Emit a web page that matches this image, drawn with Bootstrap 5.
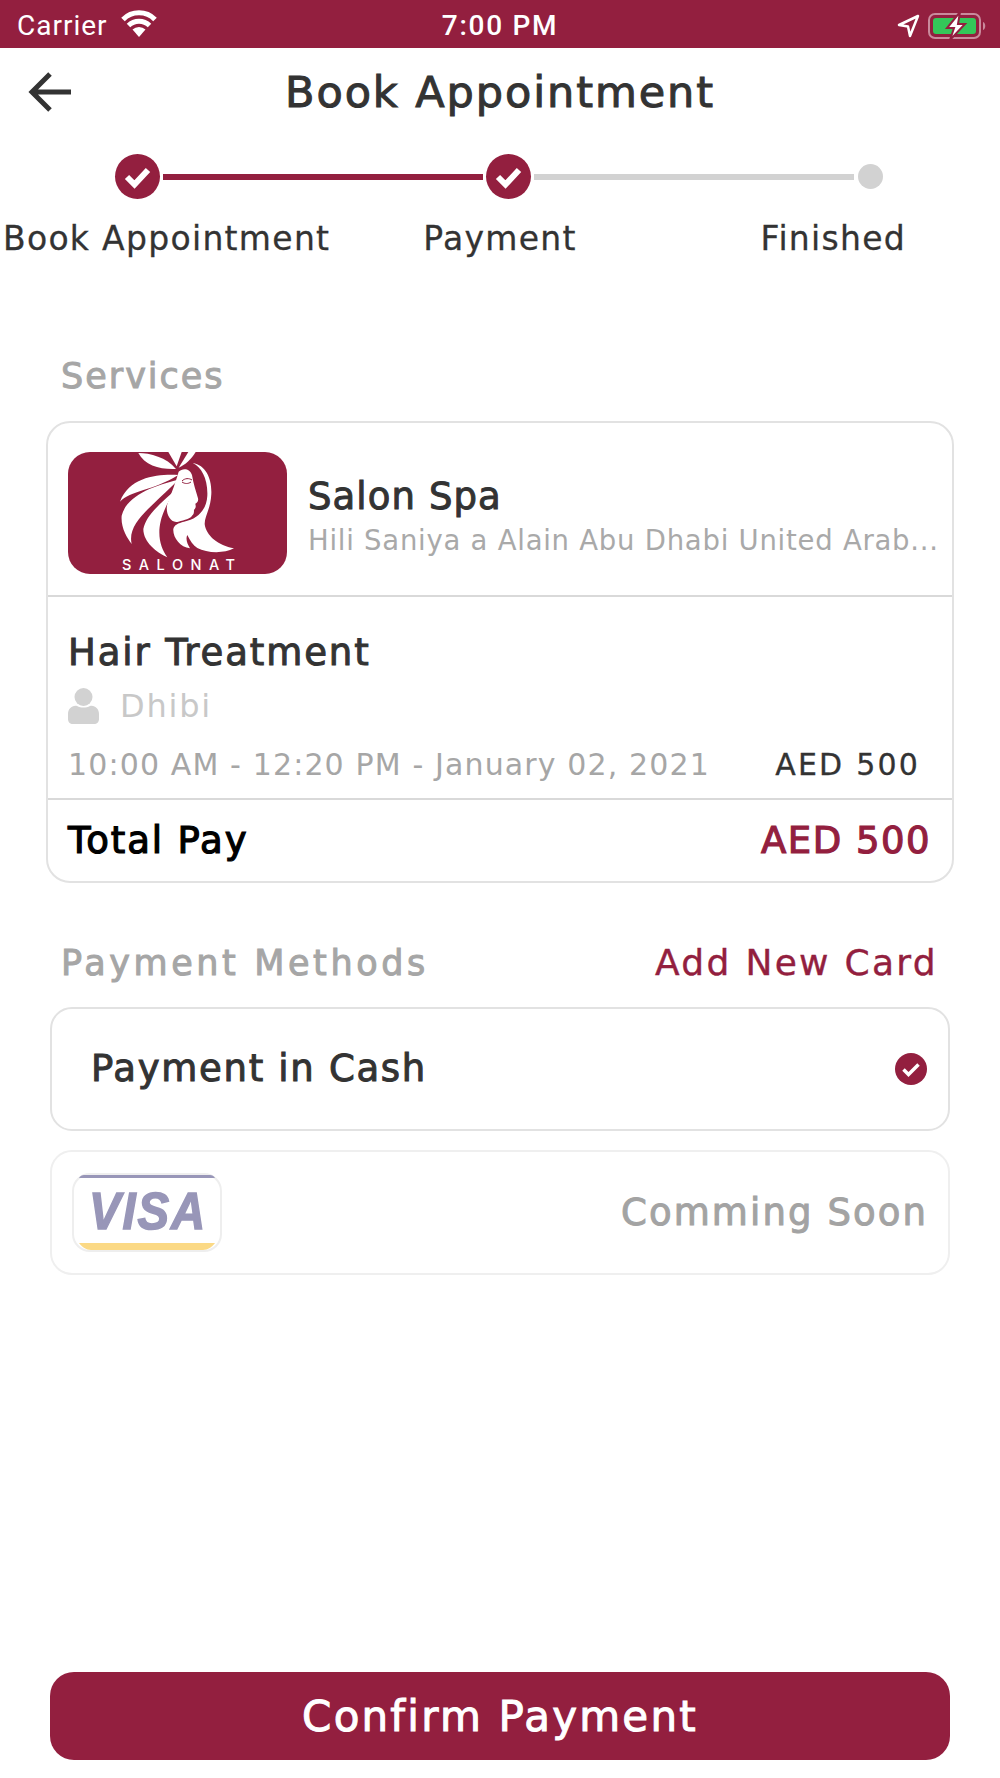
<!DOCTYPE html>
<html lang="en">
<head>
    <meta charset="UTF-8">
    <title>Book Appointment</title>
    <link rel="stylesheet" href="https://cdn.jsdelivr.net/npm/bootstrap@5.3.0/dist/css/bootstrap.min.css">
    <style>
        body { font-family: "DejaVu Sans", sans-serif; color: #333; background: #fff; width: 1000px; height: 1778px; overflow: hidden; display: flex; flex-direction: column; }
        .semi { -webkit-text-stroke: 1px currentColor; }
        .status-bar { background: #931f3f; height: 48px; color: #fff; padding: 3px 12px 0 17px; font-family: Roboto, sans-serif; font-size: 28px; position: relative; flex: none; letter-spacing: 1px; }
        .status-time { position: absolute; left: 0; right: 0; text-align: center; font-weight: 500; letter-spacing: 1.7px; }
        .wifi-icon { margin-left: 12px; margin-bottom: 4px; }
        .top-title { height: 88px; flex: none; padding-left: 28px; position: relative; }
        .top-title h1 { position: absolute; left: 0; right: 0; top: 19px; text-align: center; font-size: 43px; font-weight: 400; margin: 0; letter-spacing: 1.9px; }
        .step-track { padding: 18px 0 0 115px; gap: 3px; flex: none; }
        .step-done { width: 45px; height: 45px; border-radius: 50%; background: #931f3f; flex: none; }
        .step-line { width: 320px; height: 6px; background: #d2d2d2; flex: none; }
        .step-line.on { background: #931f3f; }
        .step-dot { width: 25px; height: 25px; border-radius: 50%; background: #d2d2d2; flex: none; margin-left: 1px; }
        .step-labels { font-size: 33px; margin-top: 20px; line-height: 40px; flex: none; letter-spacing: 1.300px; white-space: nowrap; -webkit-text-stroke: .3px currentColor; }
        .sec-title { font-size: 35px; color: #a6a6a6; line-height: 40px; letter-spacing: 2px; }
        .sec-title.wide { letter-spacing: 3.600px; }
        .services-wrap { padding: 0 46px; margin-top: 97px; flex: none; }
        .services-wrap .sec-title { padding-left: 15px; margin-bottom: 25px; }
        .svc-card { border: 2px solid #e2e2e2; border-radius: 24px; height: 462px; }
        .shop-row { height: 174px; border-bottom: 2px solid #d9d9d9; padding: 29px 12px 0 20px; gap: 21px; }
        .shop-logo { width: 219px; height: 122px; border-radius: 22px; background: #931f3f; flex: none; display: block; }
        .shop-name { font-size: 37px; line-height: 44px; margin-top: 23px; letter-spacing: 1.100px; }
        .shop-addr { font-size: 27.500px; color: #a9a9a9; line-height: 34px; margin-top: 4px; white-space: nowrap; overflow: hidden; letter-spacing: .75px; }
        .treat-row { height: 203px; border-bottom: 2px solid #d9d9d9; padding: 34px 32px 0 20px; }
        .treat-name { font-size: 37px; line-height: 44px; letter-spacing: 1.900px; }
        .staff-row { font-size: 32px; color: #c8c8c8; line-height: 40px; margin-top: 11px; gap: 21px; letter-spacing: 1.800px; }
        .time-row { font-size: 30px; line-height: 40px; margin-top: 19px; color: #a6a6a6; white-space: nowrap; letter-spacing: 1.130px; }
        .time-row b { font-weight: 400; color: #333; letter-spacing: 2.200px; -webkit-text-stroke: .3px currentColor; }
        .total-row { padding: 0 21px 0 20px; height: 81px; font-size: 37px; color: #000; letter-spacing: 1.900px; -webkit-text-stroke: 1.200px currentColor; }
        .total-row b { font-weight: 400; color: #931f3f; letter-spacing: 1.500px; }
        .pay-wrap { padding: 0 50px; margin-top: 60px; flex: none; }
        .pay-head { padding: 0 12px 0 11px; margin-bottom: 24px; }
        .add-card { font-size: 36px; color: #931f3f; line-height: 40px; letter-spacing: 2.300px; -webkit-text-stroke: .4px currentColor; }
        .pay-box { height: 124px; border: 2px solid #e2e2e2; border-radius: 22px; padding: 0 21px 0 39px; font-size: 37px; letter-spacing: 1.700px; }
        .pay-box.off { height: 125px; border-color: #efefef; margin-top: 19px; padding: 0 20px; color: #a3a3a3; letter-spacing: 2.100px; }
        .visa-card { width: 150px; height: 79px; display: block; }
        .visa-word { font-family: "Liberation Sans", sans-serif; font-weight: 700; font-style: italic; font-size: 52px; fill: #9896b8; stroke: #9896b8; stroke-width: 1.500px; }
        .logo-word { font-family: Inter, sans-serif; font-size: 14.500px; font-weight: 500; fill: #fff; }
        .confirm-btn { margin: auto 50px 18px; height: 88px; background: #931f3f; border: 0; border-radius: 24px; color: #fff; font-size: 42px; letter-spacing: 2.200px; flex: none; }
        .confirm-btn:hover { background: #931f3f; color: #fff; }
    </style>
</head>
<body>
    <div class="status-bar d-flex align-items-center">
        <span class="status-time">7:00 PM</span>
        <span>Carrier</span>
        <svg class="wifi-icon" width="38" height="28" viewBox="0 0 38 28"><path d="M19 27 12.500 19.500a9.500 9.500 0 0 1 13 0z" fill="#fff"/><path d="M8.500 15.500a15 15 0 0 1 21 0M3 9.500a22.500 22.500 0 0 1 32 0" fill="none" stroke="#fff" stroke-width="5"/></svg>
        <div class="ms-auto d-flex align-items-center gap-2">
            <svg width="24" height="24" viewBox="0 0 24 24"><path d="M22 2 3 11l9 1.500L14 22z" fill="none" stroke="#fff" stroke-width="2.500" stroke-linejoin="round"/></svg>
            <svg width="60" height="28" viewBox="0 0 60 28">
                <rect x="1" y="2" width="51" height="24" rx="6" fill="none" stroke="#c98a9c" stroke-width="2"/>
                <rect x="5" y="6" width="43" height="16" rx="3" fill="#34c759"/>
                <path d="M55 10c3 1 3 7 0 8z" fill="#c98a9c"/>
                <path d="M32 0 19 16h7l-4 12 15-16h-7z" fill="#fff" stroke="#931f3f" stroke-width="2"/>
            </svg>
        </div>
    </div>

    <div class="top-title d-flex align-items-center">
        <h1 class="semi">Book Appointment</h1>
        <svg width="44" height="44" viewBox="0 0 44 44"><path d="M43 22H5M22 4 4 22l18 18" fill="none" stroke="#333" stroke-width="5"/></svg>
    </div>

    <div class="step-track d-flex align-items-center">
        <div class="step-done"><svg width="45" height="45" viewBox="0 0 45 45"><path d="m12 23 7.500 7.500L33 16" fill="none" stroke="#fff" stroke-width="6"/></svg></div>
        <div class="step-line on"></div>
        <div class="step-done"><svg width="45" height="45" viewBox="0 0 45 45"><path d="m12 23 7.500 7.500L33 16" fill="none" stroke="#fff" stroke-width="6"/></svg></div>
        <div class="step-line"></div>
        <div class="step-dot"></div>
    </div>
    <div class="row g-0 step-labels text-center">
        <div class="col-4">Book Appointment</div>
        <div class="col-4">Payment</div>
        <div class="col-4">Finished</div>
    </div>

    <div class="services-wrap">
        <div class="sec-title semi">Services</div>
        <div class="svc-card">
            <div class="shop-row d-flex">
                <svg class="shop-logo" viewBox="0 0 219 122">
                    <g transform="translate(42 -3) scale(.3333)" fill="#fff">
                        <path d="M85 12C120 12 170 25 198 60 150 62 105 50 85 12z"/>
                        <path d="M175 9h40L200 52z"/>
                        <path d="M206 56 235 9h22C245 30 225 48 206 56z"/>
                        <path d="M205 78C150 75 60 80 30 158 60 125 130 125 205 78z"/>
                        <path d="M205 92C130 110 50 140 35 200 32 235 50 265 65 285 50 220 130 170 205 92z"/>
                        <path d="M207 112C170 150 110 190 100 240 100 280 140 310 172 325 140 280 130 210 207 112z"/>
                        <path d="M206 68C218 56 240 58 246 78 250 105 258 125 264 148 266 156 262 160 256 164 258 172 258 178 252 182 252 190 252 196 246 200 240 210 225 212 205 218 180 225 165 190 172 165 186 130 198 95 206 68z"/>
                        <path d="M248 42C288 48 306 90 304 135 302 180 284 200 284 225 288 260 325 290 372 298 340 315 290 312 262 297 250 290 240 275 232 258 226 270 232 285 240 298 210 295 188 265 190 240 192 228 205 222 222 218 265 210 290 180 292 140 294 90 275 55 248 42z"/>
                    </g>
                    <path d="M114 30c3 2 6 2 9 0M114 29c3-3 7-3 10-1" fill="none" stroke="#931f3f" stroke-width="1"/>
                    <text class="logo-word" x="54" y="118" textLength="113">SALONAT</text>
                </svg>
                <div class="flex-grow-1 overflow-hidden">
                    <div class="shop-name semi">Salon Spa</div>
                    <div class="shop-addr">Hili Saniya a Alain Abu Dhabi United Arab...</div>
                </div>
            </div>
            <div class="treat-row">
                <div class="treat-name semi">Hair Treatment</div>
                <div class="staff-row d-flex align-items-center">
                    <svg width="31" height="38" viewBox="0 0 31 38"><circle cx="15.500" cy="10" r="9" fill="#d2d2d2"/><path d="M0 27c0-5 4-9 9-8 4 2 9 2 13 0 5-1 9 3 9 8v5c0 3-2 5-5 5H5c-3 0-5-2-5-5z" fill="#d2d2d2"/></svg>
                    <span>Dhibi</span>
                </div>
                <div class="time-row d-flex justify-content-between">
                    <span>10:00 AM - 12:20 PM - January 02, 2021</span>
                    <b>AED 500</b>
                </div>
            </div>
            <div class="total-row d-flex justify-content-between align-items-center">
                <span>Total Pay</span>
                <b>AED 500</b>
            </div>
        </div>
    </div>

    <div class="pay-wrap">
        <div class="pay-head d-flex justify-content-between">
            <div class="sec-title wide semi">Payment Methods</div>
            <div class="add-card">Add New Card</div>
        </div>
        <div class="pay-box d-flex align-items-center justify-content-between">
            <span class="semi">Payment in Cash</span>
            <svg width="32" height="32" viewBox="0 0 32 32"><circle cx="16" cy="16" r="16" fill="#931f3f"/><path d="m8.500 16.500 5 5 10-10" fill="none" stroke="#fff" stroke-width="3.500"/></svg>
        </div>
        <div class="pay-box off d-flex align-items-center justify-content-between">
            <svg class="visa-card" viewBox="0 0 150 79">
                <rect x="1" y="1" width="148" height="77" rx="17" fill="#fff" stroke="#eee" stroke-width="2"/>
                <path d="M12 2h126c2 0 4 1 5 3H7c1-2 3-3 5-3z" fill="#9896b8"/>
                <path d="M7 70h136c-3 4-7 7-12 7H19c-5 0-9-3-12-7z" fill="#fbd985"/>
                <text class="visa-word" x="17" y="56" textLength="118" lengthAdjust="spacingAndGlyphs">VISA</text>
            </svg>
            <span class="semi">Comming Soon</span>
        </div>
    </div>

    <button class="btn confirm-btn" type="button"><span class="semi">Confirm Payment</span></button>
</body>
</html>
